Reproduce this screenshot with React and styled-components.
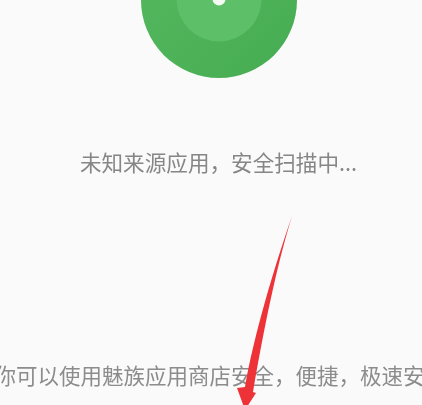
import React from "react";
import styled, { createGlobalStyle } from "styled-components";

const Global = createGlobalStyle`
  html, body { margin: 0; padding: 0; background: #fafafa; }
`;

const Screen = styled.main`
  position: relative;
  box-sizing: border-box;
  width: 422px;
  height: 405px;
  padding-left: 15px;
  overflow: hidden;
  background: #fafafa;
  display: flex;
  flex-direction: column;
  align-items: center;
  font-family: "Noto Sans CJK SC", "Noto Sans", sans-serif;
  color: #8a8a8a;
`;

const Disc = styled.svg`
  display: block;
  width: 156px;
  height: 78px;
  flex: none;
  filter: blur(0.4px);
`;

const Status = styled.p`
  margin: 69px 0 0;
  font-size: 21.6px;
  line-height: 30px;
  white-space: nowrap;
  color: #868686;
  filter: blur(0.3px);
`;

const Notice = styled.p`
  align-self: flex-start;
  margin: 183px 0 0 -20.5px;
  font-size: 21.5px;
  line-height: 30px;
  white-space: nowrap;
  color: #8c8c8c;
  filter: blur(0.3px);
`;

const Arrow = styled.svg`
  position: absolute;
  left: 230px;
  top: 210px;
  width: 70px;
  height: 195px;
`;

export default function App() {
  return (
    <Screen>
      <Global />
      <Disc viewBox="0 0 156 78">
        <defs>
          <linearGradient id="discFill" x1="0" y1="0" x2="1" y2="1">
            <stop offset="0" stopColor="#55b95f" />
            <stop offset="1" stopColor="#46ac52" />
          </linearGradient>
        </defs>
        <circle cx="78" cy="0" r="78" fill="url(#discFill)" />
        <circle cx="78" cy="-1" r="42.5" fill="#5dc068" />
        <circle cx="78" cy="-1" r="6.5" fill="#f4fbf5" />
      </Disc>
      <Status>未知来源应用，安全扫描中...</Status>
      <Notice>你可以使用魅族应用商店安全，便捷，极速安装应用</Notice>
      <Arrow viewBox="0 0 70 195">
        <path
          d="M62 6 C50 45 37 100 23 182 L26 183 L15 200 L7 178 L15 177 C24 125 44 58 62 6 Z"
          fill="#ee3338"
        />
      </Arrow>
    </Screen>
  );
}
